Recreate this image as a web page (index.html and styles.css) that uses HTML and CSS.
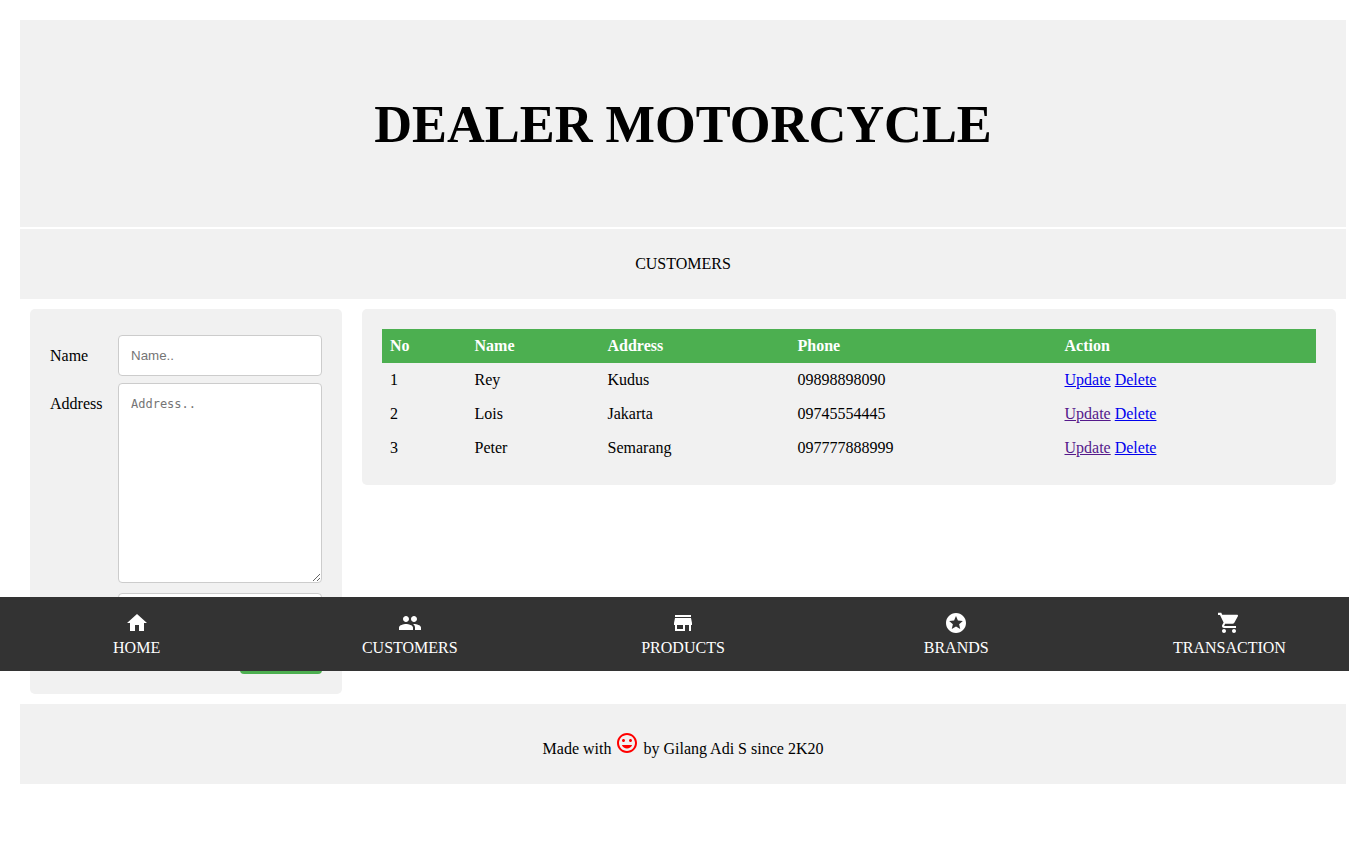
FILE: index.html
```html
<!DOCTYPE html>
<html lang="en">
<head>
<meta charset="utf-8">
<title>Dealer Motorcycle</title>
<link rel="stylesheet" href="styles.css">
</head>
<body>
<div class="page">
  <header class="banner"><h1 class="title">DEALER MOTORCYCLE</h1></header>
  <div class="subbar">CUSTOMERS</div>
  <main class="content">
    <form class="form-card">
      <div class="form-row row-name">
        <label class="form-label" for="name">Name</label>
        <input class="field" id="name" type="text" placeholder="Name..">
      </div>
      <div class="form-row row-address">
        <label class="form-label" for="address">Address</label>
        <textarea class="field area" id="address" placeholder="Address.."></textarea>
      </div>
      <div class="form-row row-phone">
        <label class="form-label" for="phone">Phone</label>
        <input class="field" id="phone" type="text" placeholder="Phone..">
      </div>
      <div class="form-actions"><button class="submit" type="button">Submit</button></div>
    </form>
    <section class="table-card">
      <table class="data">
        <thead>
          <tr><th class="c-no">No</th><th class="c-name">Name</th><th class="c-addr">Address</th><th class="c-phone">Phone</th><th class="c-act">Action</th></tr>
        </thead>
        <tbody>
          <tr><td>1</td><td>Rey</td><td>Kudus</td><td>09898898090</td><td><a class="lnk" href="#">Update</a> <a class="lnk" href="#">Delete</a></td></tr>
          <tr><td>2</td><td>Lois</td><td>Jakarta</td><td>09745554445</td><td><a class="lnk seen" href="#">Update</a> <a class="lnk" href="#">Delete</a></td></tr>
          <tr><td>3</td><td>Peter</td><td>Semarang</td><td>097777888999</td><td><a class="lnk seen" href="#">Update</a> <a class="lnk" href="#">Delete</a></td></tr>
        </tbody>
      </table>
    </section>
  </main>
  <footer class="foot">
    <span class="foot-text">Made with <svg class="mood" viewBox="0 0 24 24"><path d="M11.99 2C6.47 2 2 6.48 2 12s4.47 10 9.99 10C17.52 22 22 17.52 22 12S17.52 2 11.99 2zM12 20c-4.42 0-8-3.58-8-8s3.58-8 8-8 8 3.58 8 8-3.58 8-8 8zm3.5-9c.83 0 1.5-.67 1.5-1.5S16.33 8 15.5 8 14 8.67 14 9.5s.67 1.5 1.5 1.5zm-7 0c.83 0 1.5-.67 1.5-1.5S9.33 8 8.5 8 7 8.67 7 9.5 7.67 11 8.5 11zm3.5 6.5c2.33 0 4.31-1.46 5.11-3.5H6.89c.8 2.04 2.78 3.5 5.11 3.5z"/></svg> by Gilang Adi S since 2K20</span>
  </footer>
  <nav class="bottom-nav">
    <a class="nav-item" href="#"><svg class="nav-icon" viewBox="0 0 24 24"><path d="M10 20v-6h4v6h5v-8h3L12 3 2 12h3v8z"/></svg><span>HOME</span></a>
    <a class="nav-item" href="#"><svg class="nav-icon" viewBox="0 0 24 24"><path d="M16 11c1.66 0 2.99-1.34 2.99-3S17.66 5 16 5c-1.66 0-3 1.34-3 3s1.34 3 3 3zm-8 0c1.66 0 2.99-1.34 2.99-3S9.66 5 8 5C6.34 5 5 6.34 5 8s1.34 3 3 3zm0 2c-2.33 0-7 1.17-7 3.5V19h14v-2.5c0-2.33-4.67-3.5-7-3.5zm8 0c-.29 0-.62.02-.97.05 1.16.84 1.97 1.97 1.97 3.45V19h6v-2.5c0-2.33-4.67-3.5-7-3.5z"/></svg><span>CUSTOMERS</span></a>
    <a class="nav-item" href="#"><svg class="nav-icon" viewBox="0 0 24 24"><path d="M20 4H4v2h16V4zm1 10v-2l-1-5H4l-1 5v2h1v6h10v-6h4v6h2v-6h1zm-9 4H6v-4h6v4z"/></svg><span>PRODUCTS</span></a>
    <a class="nav-item" href="#"><svg class="nav-icon" viewBox="0 0 24 24"><path d="M11.99 2C6.47 2 2 6.48 2 12s4.47 10 9.99 10C17.52 22 22 17.52 22 12S17.52 2 11.99 2zm4.24 16L12 15.45 7.77 18l1.12-4.81-3.73-3.23 4.92-.42L12 5l1.92 4.53 4.92.42-3.73 3.23L16.23 18z"/></svg><span>BRANDS</span></a>
    <a class="nav-item" href="#"><svg class="nav-icon" viewBox="0 0 24 24"><path d="M7 18c-1.1 0-1.99.9-1.99 2S5.9 22 7 22s2-.9 2-2-.9-2-2-2zM1 2v2h2l3.6 7.59-1.35 2.45c-.16.28-.25.61-.25.96 0 1.1.9 2 2 2h12v-2H7.42c-.14 0-.25-.11-.25-.25l.03-.12.9-1.83h7.45c.75 0 1.41-.41 1.75-1.03l3.58-6.49c.08-.14.12-.31.12-.48 0-.55-.45-1-1-1H5.21l-.94-2H1zm16 16c-1.1 0-1.99.9-1.99 2s.89 2 1.99 2 2-.9 2-2-.9-2-2-2z"/></svg><span>TRANSACTION</span></a>
  </nav>
</div>
</body>
</html>
```
FILE: styles.css
```css
html, body {
  margin: 0;
  padding: 0;
  overflow: hidden;
  height: 854px;
}
body {
  background: #fff;
  color: #000;
  font-family: "Liberation Serif", "Times New Roman", serif;
  font-size: 16px;
}
.page {
  position: relative;
  width: 1366px;
  box-sizing: border-box;
  padding: 20px;
}
.banner {
  background: #f1f1f1;
  height: 207px;
  display: flex;
  align-items: center;
  justify-content: center;
}
.title {
  margin: 0;
  font-size: 52.4px;
  font-weight: bold;
  line-height: 64px;
}
.subbar {
  margin-top: 2px;
  height: 70px;
  background: #f1f1f1;
  display: flex;
  align-items: center;
  justify-content: center;
}
.content {
  display: flex;
  align-items: flex-start;
  gap: 20px;
  margin: 10px 10px 10px;
}
.form-card {
  width: 312px;
  height: 385px;
  box-sizing: border-box;
  background: #f1f1f1;
  border-radius: 5px;
  padding: 26px 20px 20px;
  flex: none;
}
.form-row {
  display: flex;
  align-items: flex-start;
}
.row-address { margin-top: 7px; }
.row-phone { margin-top: 10px; }
.form-label {
  width: 68px;
  flex: none;
  line-height: 18px;
  padding-top: 12px;
}
.field {
  display: block;
  box-sizing: border-box;
  width: 204px;
  height: 41px;
  margin: 0;
  padding: 12px;
  border: 1px solid #ccc;
  border-radius: 4px;
  background: #fff;
  font-family: "Liberation Sans", Arial, sans-serif;
  font-size: 13.33px;
}
.area {
  height: 200px;
  font-family: "DejaVu Sans Mono", "Liberation Mono", monospace;
  font-size: 12px;
  padding-top: 13px;
  resize: vertical;
}
.form-actions {
  display: flex;
  justify-content: flex-end;
  margin-top: 6px;
}
.submit {
  width: 82px;
  height: 34px;
  border: 0;
  border-radius: 4px;
  background: #4caf50;
  color: #fff;
  font-size: 16px;
  font-family: inherit;
}
.table-card {
  flex: 1;
  background: #f1f1f1;
  border-radius: 5px;
  padding: 20px;
  height: 176px;
  box-sizing: border-box;
}
.data {
  width: 934px;
  border-collapse: collapse;
  table-layout: fixed;
}
.data th, .data td {
  padding: 8px;
  height: 34px;
  box-sizing: border-box;
  text-align: left;
  line-height: 18px;
}
.data th {
  background: #4caf50;
  color: #fff;
  font-weight: bold;
}
.c-no { width: 84.5px; }
.c-name { width: 133px; }
.c-addr { width: 190px; }
.c-phone { width: 267px; }
.lnk { color: #0000ee; }
.seen { color: #551a8b; }
.foot {
  height: 80px;
  background: #f1f1f1;
  display: flex;
  align-items: center;
  justify-content: center;
}
.mood {
  width: 24px;
  height: 24px;
  fill: #f00;
  vertical-align: -1px;
}
.bottom-nav {
  position: absolute;
  left: 0;
  top: 597px;
  width: 1366px;
  height: 74px;
  background: #333;
  display: flex;
}
.nav-item {
  flex: 1;
  display: flex;
  flex-direction: column;
  align-items: center;
  padding-top: 14px;
  box-sizing: border-box;
  color: #fff;
  text-decoration: none;
  line-height: 18px;
}
.nav-icon {
  width: 24px;
  height: 24px;
  fill: #fff;
  margin-bottom: 4px;
}
```
